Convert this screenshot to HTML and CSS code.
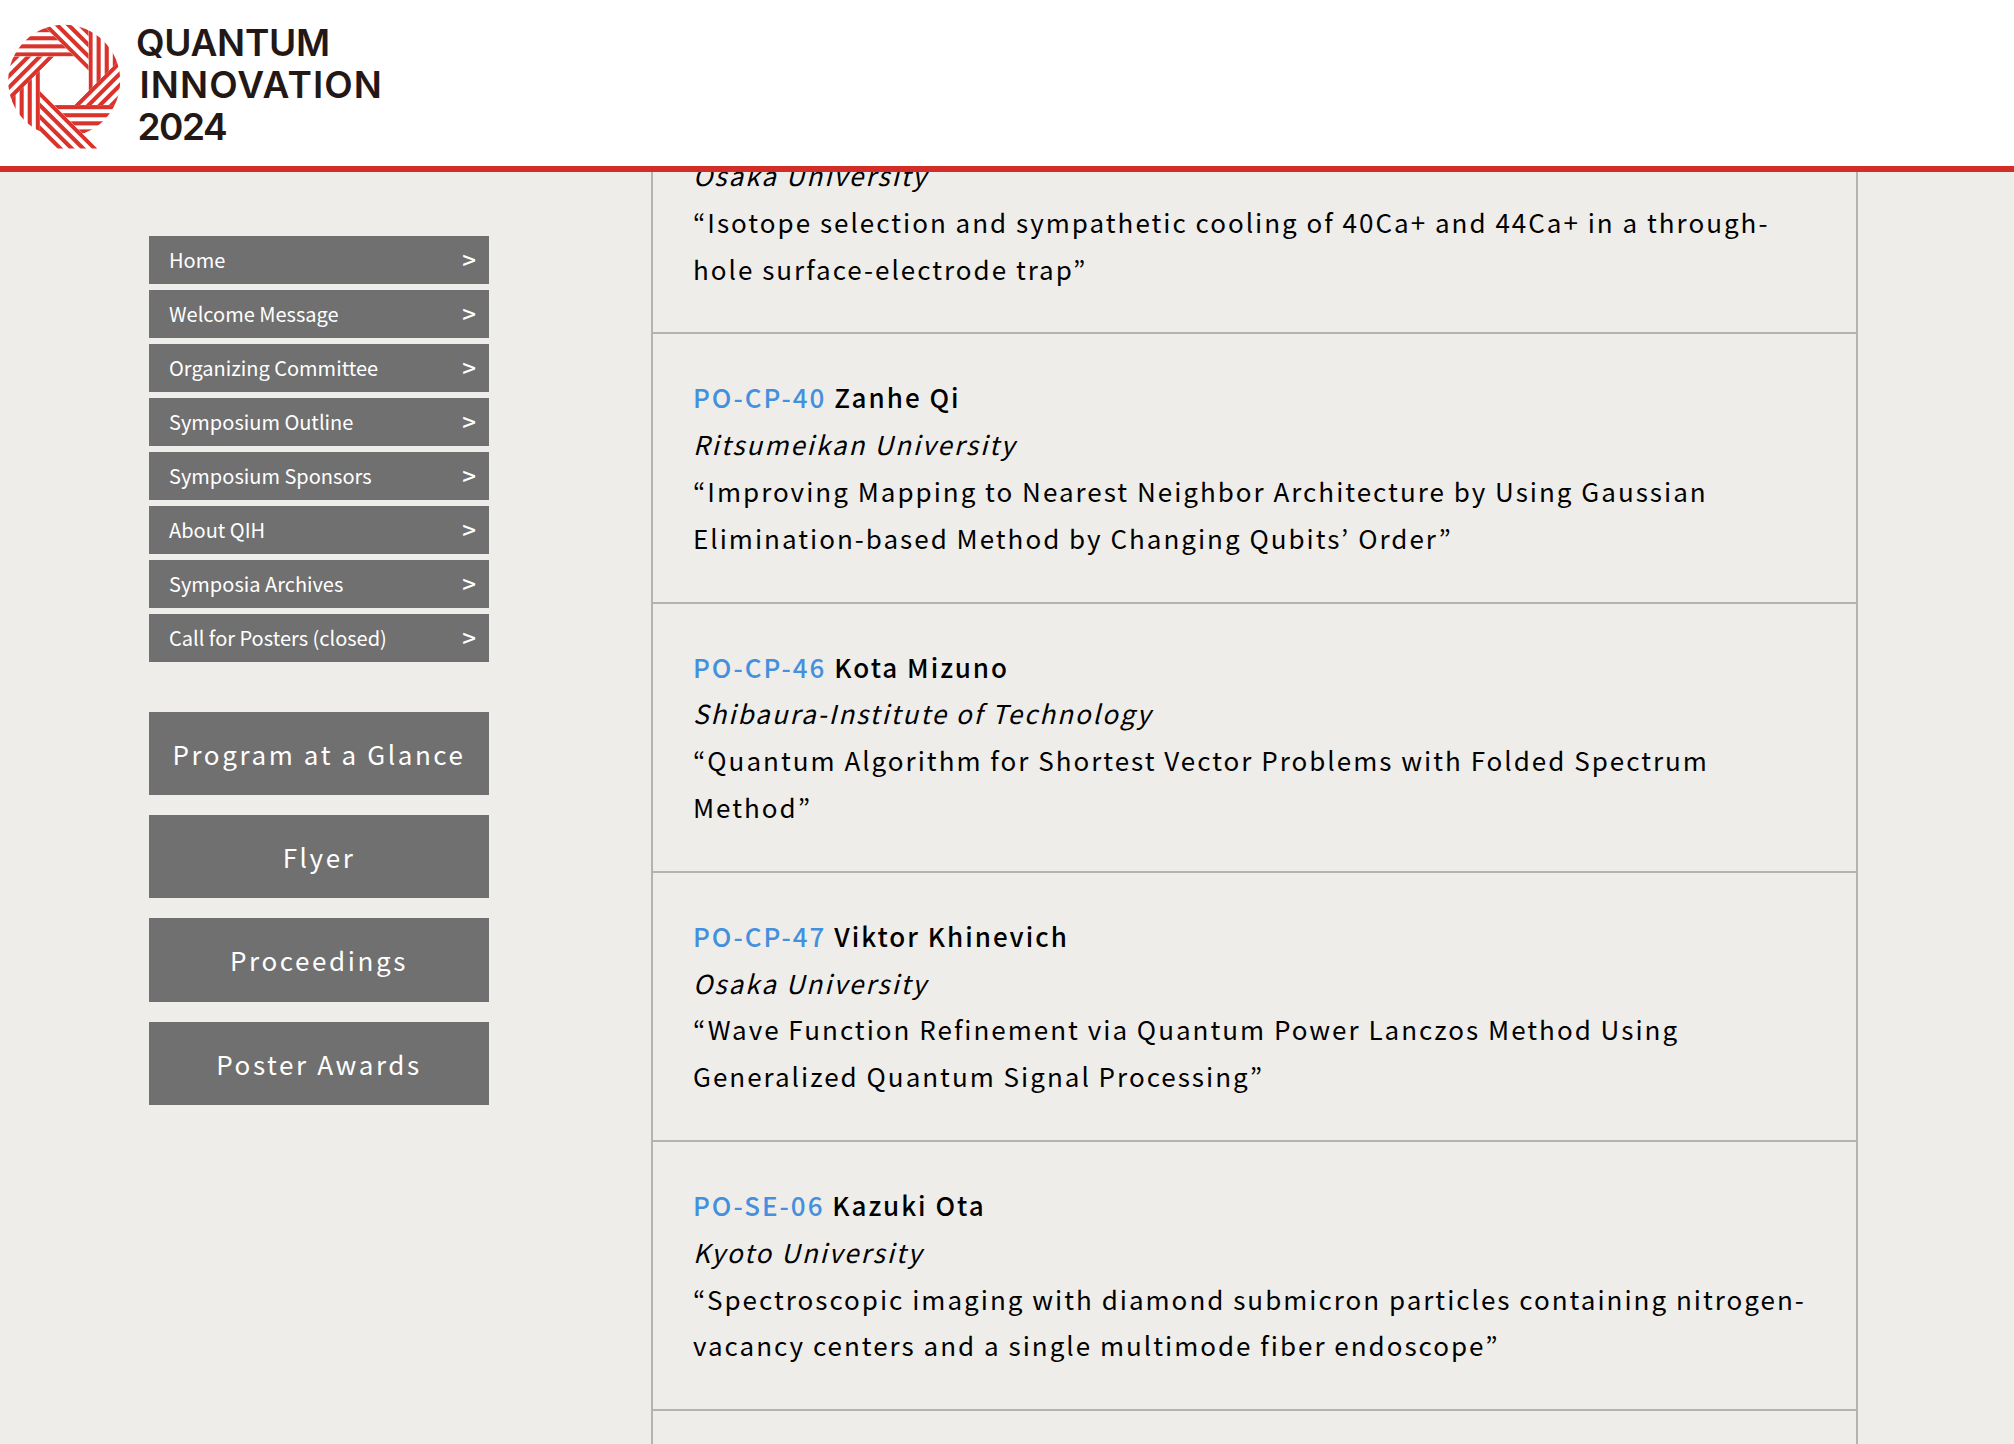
FILE: index.html
```html
<!DOCTYPE html>
<html lang="en">
<head>
<meta charset="utf-8">
<title>Quantum Innovation 2024</title>
<link rel="stylesheet" href="styles.css">
</head>
<body>
<header class="site-header">
  <svg class="logo-mark" viewBox="0 0 128 150" aria-hidden="true">
    <defs>
      <clipPath id="disc"><circle cx="0" cy="0" r="56"/></clipPath>
      <clipPath id="wedge"><polygon points="10.1,-24.3 -90,-24.3 -90,-94.3 -59.9,-94.3"/></clipPath>
      <clipPath id="tail"><polygon points="10.1,-24.3 -71.5,-24.3 -42.9,-53 -18.6,-53"/></clipPath>
      <g id="stripes">
        <rect x="-100" y="-28.4" width="120" height="4.1"/>
        <rect x="-100" y="-36.5" width="120" height="4.1"/>
        <rect x="-100" y="-44.6" width="120" height="4.1"/>
        <rect x="-100" y="-52.7" width="120" height="4.1"/>
        <rect x="-100" y="-60.8" width="120" height="4.1"/>
      </g>
      <g id="blade" clip-path="url(#wedge)"><use href="#stripes"/></g>
    </defs>
    <g class="logo-art" transform="translate(64.2 80.8)">
      <g clip-path="url(#disc)">
        <use href="#blade"/>
        <use href="#blade" transform="rotate(45)"/>
        <use href="#blade" transform="rotate(90)"/>
        <use href="#blade" transform="rotate(135)"/>
        <use href="#blade" transform="rotate(180)"/>
        <use href="#blade" transform="rotate(270)"/>
        <use href="#blade" transform="rotate(315)"/>
      </g>
      <g transform="rotate(225)"><g clip-path="url(#tail)"><use href="#stripes"/></g></g>
    </g>
  </svg>
  <div class="logo-text">
    <span class="logo-line logo-line-q">QUANTUM</span>
    <span class="logo-line logo-line-i">INNOVATION</span>
    <span class="logo-line logo-line-y">2024</span>
  </div>
</header>
<div class="layout">
  <aside class="sidebar">
    <nav class="side-nav">
      <a class="side-link">Home<span class="side-arrow">&gt;</span></a>
      <a class="side-link">Welcome Message<span class="side-arrow">&gt;</span></a>
      <a class="side-link">Organizing Committee<span class="side-arrow">&gt;</span></a>
      <a class="side-link">Symposium Outline<span class="side-arrow">&gt;</span></a>
      <a class="side-link">Symposium Sponsors<span class="side-arrow">&gt;</span></a>
      <a class="side-link">About QIH<span class="side-arrow">&gt;</span></a>
      <a class="side-link">Symposia Archives<span class="side-arrow">&gt;</span></a>
      <a class="side-link">Call for Posters (closed)<span class="side-arrow">&gt;</span></a>
    </nav>
    <div class="side-buttons">
      <a class="side-button">Program at a Glance</a>
      <a class="side-button">Flyer</a>
      <a class="side-button">Proceedings</a>
      <a class="side-button">Poster Awards</a>
    </div>
  </aside>
  <main class="poster-list">
    <div class="poster-scroll">
      <section class="poster poster-clipped">
        <p><em>Osaka University</em></p>
        <p>“Isotope selection and sympathetic cooling of 40Ca+ and 44Ca+ in a through-hole surface-electrode trap”</p>
      </section>
      <section class="poster">
        <p class="poster-name"><span class="poster-id">PO-CP-40</span> Zanhe Qi</p>
        <p><em>Ritsumeikan University</em></p>
        <p>“Improving Mapping to Nearest Neighbor Architecture by Using Gaussian Elimination-based Method by Changing Qubits’ Order”</p>
      </section>
      <section class="poster">
        <p class="poster-name"><span class="poster-id">PO-CP-46</span> Kota Mizuno</p>
        <p><em>Shibaura-Institute of Technology</em></p>
        <p>“Quantum Algorithm for Shortest Vector Problems with Folded Spectrum Method”</p>
      </section>
      <section class="poster">
        <p class="poster-name"><span class="poster-id">PO-CP-47</span> Viktor Khinevich</p>
        <p><em>Osaka University</em></p>
        <p>“Wave Function Refinement via Quantum Power Lanczos Method Using Generalized Quantum Signal Processing”</p>
      </section>
      <section class="poster">
        <p class="poster-name"><span class="poster-id">PO-SE-06</span> Kazuki Ota</p>
        <p><em>Kyoto University</em></p>
        <p>“Spectroscopic imaging with diamond submicron particles containing nitrogen-vacancy centers and a single multimode fiber endoscope”</p>
      </section>
    </div>
  </main>
</div>
</body>
</html>
```

FILE: styles.css
```css
* { box-sizing: border-box; }
html, body { margin: 0; height: 100%; }
body {
  display: flex;
  flex-direction: column;
  height: 1444px;
  overflow: hidden;
  background: #eeedea;
  color: #000;
  font-family: "Noto Sans CJK JP", "Noto Sans", sans-serif;
}
.site-header {
  flex: none;
  display: flex;
  align-items: flex-start;
  height: 172px;
  background: #fff;
  border-bottom: 6px solid #d32d27;
}
.logo-mark { width: 128px; height: 150px; flex: none; }
.logo-art { fill: #d9332b; }
.logo-text {
  margin: 22px 0 0 8px;
  font-family: Inter, "Liberation Sans", sans-serif;
  font-weight: 600;
  font-size: 37px;
  line-height: 42px;
  color: #231815;
}
.logo-line { display: block; }
.logo-line-q { letter-spacing: -0.3px; }
.logo-line-i { margin-left: 3.5px; letter-spacing: 1.1px; }
.logo-line-y { margin-left: 1.5px; letter-spacing: -1.5px; }
.layout {
  flex: 1;
  min-height: 0;
  display: flex;
  padding-left: 149px;
}
.sidebar {
  flex: none;
  width: 340px;
  padding-top: 64px;
}
.side-nav { display: flex; flex-direction: column; gap: 6px; }
.side-link {
  display: flex;
  justify-content: space-between;
  align-items: center;
  height: 48px;
  padding: 0 13px 2px 20px;
  background: #707070;
  color: #fff;
  font-size: 20px;
}
.side-arrow { font-size: 24px; font-weight: 500; line-height: 1; }
.side-buttons {
  display: flex;
  flex-direction: column;
  gap: 20.05px;
  margin-top: 49.7px;
}
.side-button {
  display: flex;
  justify-content: center;
  align-items: center;
  height: 83.25px;
  background: #707070;
  color: #fff;
  font-size: 26px;
  letter-spacing: 0.1em;
}
.poster-list {
  flex: none;
  width: 1207px;
  margin-left: 162px;
  border-left: 2px solid #b3b3b3;
  border-right: 2px solid #b3b3b3;
  overflow: hidden;
}
.poster-scroll { margin-top: -20px; }
.poster {
  padding: 40px;
  border-bottom: 2px solid #b3b3b3;
  font-size: 26px;
  line-height: 46.8px;
  letter-spacing: 2px;
}
.poster-clipped { padding-top: 0; }
.poster p { margin: 0; }
.poster-name { font-weight: 500; }
.poster-id { color: #4590dd; }
```
